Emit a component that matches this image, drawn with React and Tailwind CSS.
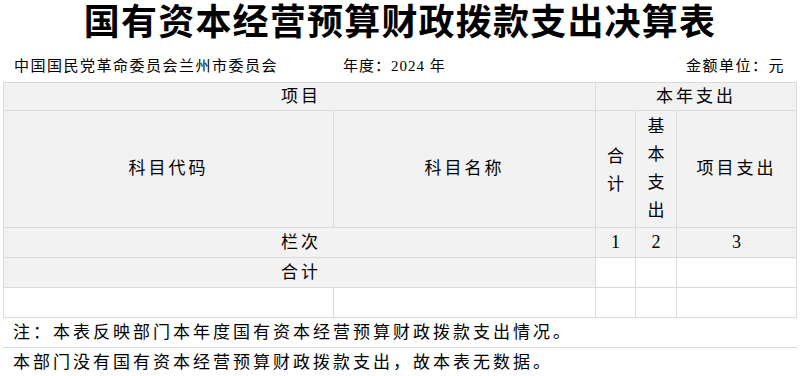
import React from 'react';

const font = { fontFamily: '"Liberation Serif", "Noto Sans CJK SC", serif' };

const Cell = ({ children, className = '' }) => (
  <div className={`flex items-center justify-center text-[17px] tracking-[3px] text-black ${className}`}>
    {children}
  </div>
);

const Stack = ({ text }) => (
  <div className="flex flex-col items-center leading-[28px]">
    {text.split('').map((c, i) => (
      <span key={i}>{c}</span>
    ))}
  </div>
);

const App = () => {
  return (
    <div className="w-[800px] h-[376px] bg-white overflow-hidden text-black" style={font}>
      <h1 className="h-[50px] pt-[1px] text-center text-[36px] font-semibold tracking-[1.2px] leading-[44px]">
        国有资本经营预算财政拨款支出决算表
      </h1>

      <div className="h-[32px] flex items-center pl-[14px] pr-[15px] text-[15px] tracking-[1.5px]">
        <span className="w-[329px]">中国国民党革命委员会兰州市委员会</span>
        <span className="tracking-[1px]">年度：2024 年</span>
        <span className="ml-auto">金额单位：元</span>
      </div>

      <div className="ml-[3px] w-[794px] bg-[#dadada] p-px grid gap-px grid-cols-[329px_261px_39px_40px_119px] grid-rows-[27px_116px_29px_29px_29px]">
        <Cell className="col-span-2 bg-[#f2f2f2] pl-[3px]">项目</Cell>
        <Cell className="col-span-3 bg-[#f2f2f2]">本年支出</Cell>

        <Cell className="bg-[#f2f2f2]">科目代码</Cell>
        <Cell className="bg-[#f2f2f2]">科目名称</Cell>
        <Cell className="bg-[#f2f2f2] pt-[4px] tracking-normal">
          <Stack text="合计" />
        </Cell>
        <Cell className="bg-[#f2f2f2] tracking-normal">
          <Stack text="基本支出" />
        </Cell>
        <Cell className="bg-[#f2f2f2]">项目支出</Cell>

        <Cell className="col-span-2 bg-[#f2f2f2] pl-[3px]">栏次</Cell>
        <Cell className="bg-[#f2f2f2] text-[18px] tracking-normal">1</Cell>
        <Cell className="bg-[#f2f2f2] text-[18px] tracking-normal">2</Cell>
        <Cell className="bg-[#f2f2f2] text-[18px] tracking-normal">3</Cell>

        <Cell className="col-span-2 bg-[#f2f2f2] pl-[3px]">合计</Cell>
        <Cell className="bg-white" />
        <Cell className="bg-white" />
        <Cell className="bg-white" />

        <Cell className="bg-white" />
        <Cell className="bg-white" />
        <Cell className="bg-white" />
        <Cell className="bg-white" />
        <Cell className="bg-white" />
      </div>

      <div className="ml-[3px] w-[794px] h-[30px] flex items-center pl-[10px] border-b border-[#dadada] text-[17px] tracking-[3px]">
        注：本表反映部门本年度国有资本经营预算财政拨款支出情况。
      </div>
      <div className="ml-[3px] w-[794px] h-[29px] flex items-center pl-[10px] text-[17px] tracking-[3px]">
        本部门没有国有资本经营预算财政拨款支出，故本表无数据。
      </div>
    </div>
  );
};

export default App;
